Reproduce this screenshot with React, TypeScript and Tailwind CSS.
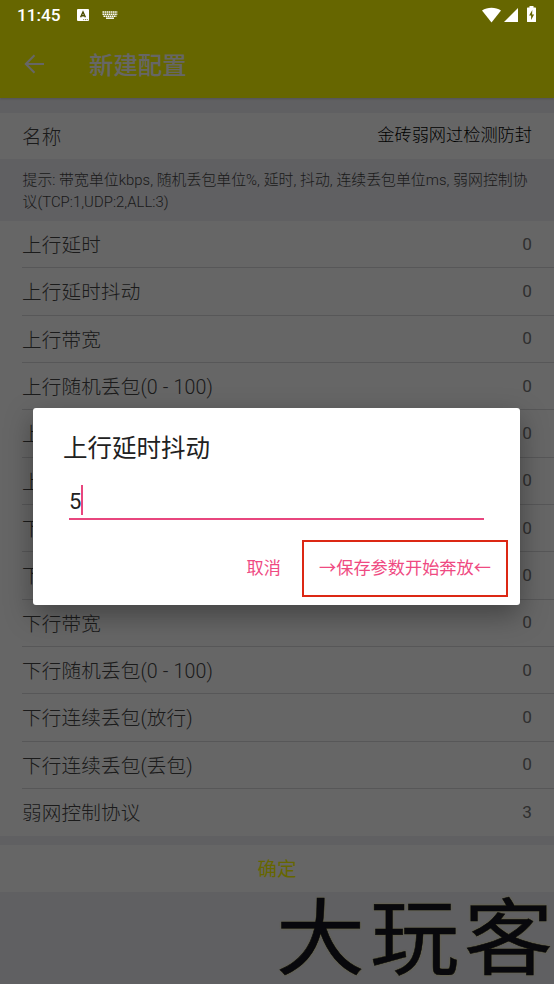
const fields = [
  { label: "上行延时", value: "0" },
  { label: "上行延时抖动", value: "0" },
  { label: "上行带宽", value: "0" },
  { label: "上行随机丢包(0 - 100)", value: "0" },
  { label: "上行连续丢包(放行)", value: "0" },
  { label: "上行连续丢包(丢包)", value: "0" },
  { label: "下行延时", value: "0" },
  { label: "下行延时抖动", value: "0" },
  { label: "下行带宽", value: "0" },
  { label: "下行随机丢包(0 - 100)", value: "0" },
  { label: "下行连续丢包(放行)", value: "0" },
  { label: "下行连续丢包(丢包)", value: "0" },
  { label: "弱网控制协议", value: "3" },
];

function StatusBar() {
  return (
    <div className="absolute inset-x-0 top-0 z-20 flex h-[30px] items-center pl-[17px] pr-[18px] text-white">
      <span className="text-[17.2px] font-medium leading-[30px]">11:45</span>
      <svg className="ml-[16px] h-3 w-3" viewBox="0 0 12 12">
        <rect width="12" height="12" rx="1" fill="#fff" />
        <path d="M3.6 8.3 6 3l2.4 5.3M4.5 6.7h3" fill="none" stroke="#4c4c00" strokeWidth="1.4" />
        <path d="M6.2 10.6h1M8 10.6h1M9.8 10.6h1" stroke="#666600" strokeWidth="0.8" />
      </svg>
      <svg className="ml-[13px] mb-px h-2 w-4" viewBox="0 0 16 8">
        <path d="M.5 1h15M.5 3.2h15M1.5 5.2h13" stroke="#fff" strokeWidth="1.5" strokeDasharray="1.6 .5" />
        <path d="M4 7.2h8" stroke="#fff" strokeWidth="1.4" />
      </svg>
      <svg className="ml-auto h-[16px] w-[19px]" viewBox="0 0 19 16">
        <path d="M0 3.5C5.4-.2 13.6-.2 19 3.5L9.5 15.5Z" fill="#fff" />
      </svg>
      <svg className="ml-[3px] h-[14px] w-[14px]" viewBox="0 0 14 14">
        <path d="M14 0v14H0Z" fill="#fff" />
      </svg>
      <svg className="ml-[9px] mb-[2px] h-[16px] w-[9px]" viewBox="0 0 9 16">
        <path d="M2.5 0h4v1.6h1.9q.6 0 .6.6v13.2q0 .6-.6.6H.6q-.6 0-.6-.6V2.2q0-.6.6-.6h1.9Z" fill="#fff" />
        <path d="M5.3 4 2.1 9.4h2V14l3-5.6h-2Z" fill="#666600" />
      </svg>
    </div>
  );
}

function AppBar() {
  return (
    <header className="flex h-[98px] items-center bg-[#ffff00] pl-6 pt-[30px] text-white shadow-[0_1px_2px_rgba(0,0,0,0.15)]">
      <svg className="h-5 w-5" viewBox="0 0 20 20" fill="none" stroke="currentColor" strokeWidth="2">
        <path d="M20 10H2.5M10.5 1.2 1.8 10l8.7 8.8" />
      </svg>
      <h1 className="ml-[45px] pt-[4px] text-[24.4px] font-medium leading-none">新建配置</h1>
    </header>
  );
}

function ParamDialog() {
  return (
    <div className="absolute inset-0 z-10 flex items-center justify-center bg-black/60 pr-px pt-[29px]">
      <div className="flex h-[197px] w-[487px] flex-col rounded-[3px] bg-white shadow-[0_10px_28px_rgba(0,0,0,0.35)]">
        <h2 className="ml-[30px] mt-[23px] text-[24.5px] leading-9 text-[#212121]">上行延时抖动</h2>
        <div className="ml-9 mt-[16px] flex h-[37px] w-[415px] border-b-2 border-[#e8467e]">
          <span className="mt-px text-[22px] leading-[35px] text-[#212121]">5</span>
          <span className="mt-[2px] h-[30px] w-[2px] bg-[#e8467e]" />
        </div>
        <div className="mt-5 flex justify-end pr-3 text-[17.2px] text-[#ef4a82]">
          <button className="mr-[21px] h-[57px]">取消</button>
          <button className="h-[57px] w-[206px] border-2 border-[#dc2814] pb-[3px] font-['Noto_Sans_CJK_SC',sans-serif]">
            →保存参数开始奔放←
          </button>
        </div>
      </div>
    </div>
  );
}

export default function App() {
  return (
    <div className="relative h-[984px] w-[554px] overflow-hidden bg-[#efeff4] font-[Roboto,'Noto_Sans_CJK_SC',sans-serif]">
      <StatusBar />
      <AppBar />

      <div className="mt-[15px] flex h-[46px] items-center justify-between bg-white px-[22px]">
        <span className="pt-[3px] text-[19.6px] font-light tracking-[0.12px] text-[#444]">名称</span>
        <span className="text-[17.2px] font-light text-black">金砖弱网过检测防封</span>
      </div>

      <p className="h-[62px] whitespace-nowrap pl-[22.5px] pt-[10px] text-[14.85px] font-light leading-[22px] tracking-[0.05px] text-[#444]">
        提示: 带宽单位kbps, 随机丢包单位%, 延时, 抖动, 连续丢包单位ms, 弱网控制协
        <br />
        议(TCP:1,UDP:2,ALL:3)
      </p>

      <ul className="bg-white pl-[22px]">
        {fields.map((field) => (
          <li
            key={field.label}
            className="flex h-[47.33px] items-center justify-between border-b-[1.5px] border-[#d9d9dc] pr-[22px] last:border-0"
          >
            <span className="pt-[3px] text-[19.6px] font-light tracking-[0.15px] text-[#444]">{field.label}</span>
            <span className="pt-px text-[17.2px] text-[#777]">{field.value}</span>
          </li>
        ))}
      </ul>

      <button className="mt-[9px] flex h-[47px] w-full items-center justify-center bg-white pt-px text-[19.5px] text-[#ffff00]">
        确定
      </button>

      <ParamDialog />

      <div className="absolute bottom-[12px] right-[1px] z-20 flex origin-bottom scale-y-[0.93] gap-[5px] font-['Noto_Sans_CJK_SC',sans-serif] text-[89px] font-normal leading-[84px] text-[#08080c] [-webkit-text-stroke:0.5px_#08080c] [text-shadow:0_0_2px_#6b6420]">
        <span>大</span>
        <span>玩</span>
        <span>客</span>
      </div>
    </div>
  );
}
